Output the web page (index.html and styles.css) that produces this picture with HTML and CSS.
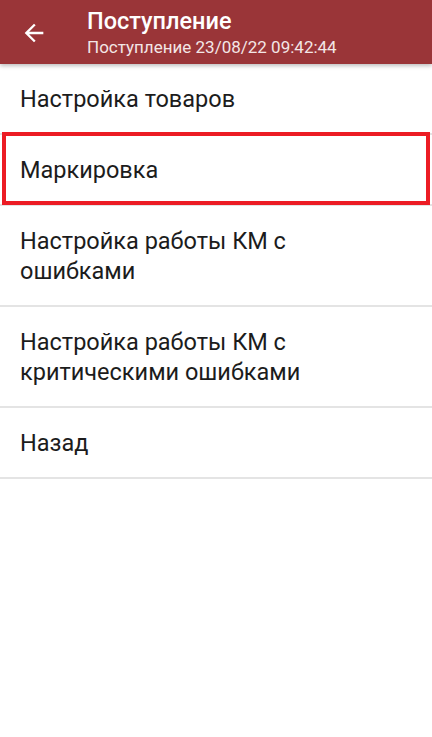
FILE: index.html
```html
<!DOCTYPE html>
<html lang="ru">
<head>
  <meta charset="UTF-8">
  <title>Поступление</title>
  <link rel="stylesheet" href="styles.css">
</head>
<body>

  <header class="toolbar">
    <button class="back" aria-label="Назад">
      <svg viewBox="0 0 24 24" width="28" height="28">
        <path d="M20 11H7.83l5.59-5.59L12 4l-8 8 8 8 1.41-1.41L7.83 13H20v-2z" fill="#fff"/>
      </svg>
    </button>
    <div class="titles">
      <div class="title">Поступление</div>
      <div class="subtitle">Поступление 23/08/22 09:42:44</div>
    </div>
  </header>

  <ul class="menu">
    <li class="item">Настройка товаров</li>
    <li class="item selected">Маркировка</li>
    <li class="item">Настройка работы КМ с<br>ошибками</li>
    <li class="item">Настройка работы КМ с<br>критическими ошибками</li>
    <li class="item">Назад</li>
  </ul>

</body>
</html>
```

FILE: styles.css
```css
body {
  margin: 0;
  font-family: Roboto, "Noto Sans", sans-serif;
  background: #fff;
  color: #1c1c1c;
}

.toolbar {
  height: 64px;
  background-color: #9a3538;
  display: flex;
  align-items: center;
  box-shadow: 0 2px 4px rgba(0, 0, 0, 0.25);
  position: relative;
  z-index: 1;
}

.back {
  width: 28px;
  height: 28px;
  margin-left: 20px;
  margin-top: 1px;
  padding: 0;
  border: none;
  background: none;
}

.titles {
  margin-left: 39px;
  margin-top: 1px;
  color: #fff;
}

.title {
  font-size: 23.5px;
  font-weight: 500;
  line-height: 28px;
}

.subtitle {
  font-size: 17px;
  line-height: 22px;
  margin-top: 1px;
  color: #f3e6e6;
}

.menu {
  list-style: none;
  margin: 0;
  padding: 0;
}

.item {
  font-size: 23.5px;
  line-height: 30px;
  padding: 20px 20px 19px;
  border-bottom: 2px solid #e4e4e4;
}

.selected {
  position: relative;
}

.selected::after {
  content: "";
  position: absolute;
  left: 2px;
  right: 2px;
  top: -3px;
  bottom: -1px;
  border: 4.5px solid #ec1c24;
}
```
